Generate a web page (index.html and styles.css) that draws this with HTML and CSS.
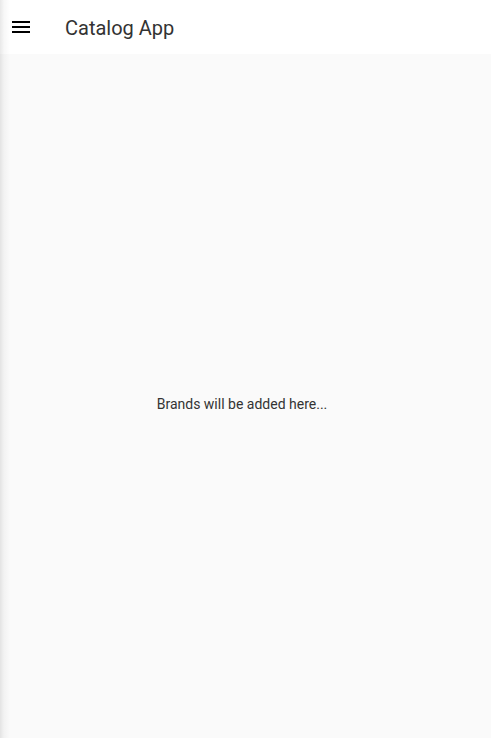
FILE: index.html
```html
<!DOCTYPE html>
<html>
<head>
<meta charset="utf-8">
<link rel="stylesheet" href="styles.css">
</head>
<body>
<div class="app">
  <header class="appbar">
    <button class="menu-btn" aria-label="menu">
      <svg width="24" height="24" viewBox="0 0 24 24"><path d="M3 18h18v-2H3v2zm0-5h18v-2H3v2zm0-7v2h18V6H3z" fill="#000"/></svg>
    </button>
    <h1 class="title">Catalog App</h1>
  </header>
  <main class="content">
    <p class="empty">Brands will be added here...</p>
  </main>
  <div class="drawer-shadow"></div>
</div>
</body>
</html>
```
FILE: styles.css
```css
html, body {
  margin: 0;
  padding: 0;
  height: 100%;
}
body {
  font-family: Roboto, "Noto Sans", sans-serif;
  background: #fafafa;
}
.app {
  position: relative;
  display: flex;
  flex-direction: column;
  height: 738px;
  overflow: hidden;
}
.appbar {
  height: 54px;
  flex: 0 0 54px;
  background: #ffffff;
  display: flex;
  align-items: center;
  padding-left: 9px;
}
.menu-btn {
  width: 24px;
  height: 24px;
  padding: 0;
  margin: 0 32px 0 0;
  border: none;
  background: none;
  display: flex;
}
.title {
  margin: 0;
  font-size: 20px;
  font-weight: 400;
  color: #333333;
  line-height: 24px;
  padding-top: 1px;
}
.content {
  flex: 1;
  display: flex;
  align-items: center;
  justify-content: center;
  padding-right: 7px;
  padding-top: 16px;
}
.empty {
  margin: 0;
  font-size: 14px;
  color: #333333;
  line-height: 20px;
}
.drawer-shadow {
  position: absolute;
  left: 0;
  top: 0;
  bottom: 0;
  width: 10px;
  background: linear-gradient(to right, rgba(0,0,0,0.09), rgba(0,0,0,0.03) 40%, rgba(0,0,0,0));
  pointer-events: none;
}
```
